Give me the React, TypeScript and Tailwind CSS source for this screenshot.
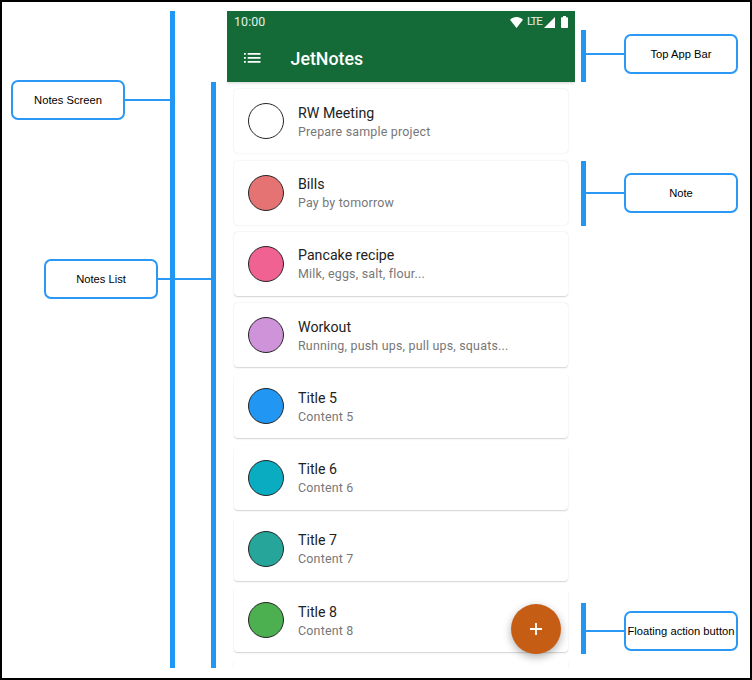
import React from "react";

type NoteItem = { title: string; content: string; color: string; shadow: string };

const soft = "shadow-[0_0_1.5px_rgba(0,0,0,0.17)]";
const medium = "shadow-[0_0.5px_1.5px_rgba(0,0,0,0.18)]";
const strong = "shadow-[0_1px_1.5px_rgba(0,0,0,0.18)]";

const notes: NoteItem[] = [
  { title: "RW Meeting", content: "Prepare sample project", color: "bg-white", shadow: soft },
  { title: "Bills", content: "Pay by tomorrow", color: "bg-[#e57373]", shadow: soft },
  { title: "Pancake recipe", content: "Milk, eggs, salt, flour...", color: "bg-[#f06292]", shadow: medium },
  { title: "Workout", content: "Running, push ups, pull ups, squats...", color: "bg-[#ce93d8]", shadow: medium },
  { title: "Title 5", content: "Content 5", color: "bg-[#2196f3]", shadow: strong },
  { title: "Title 6", content: "Content 6", color: "bg-[#0aacc1]", shadow: strong },
  { title: "Title 7", content: "Content 7", color: "bg-[#26a69a]", shadow: strong },
  { title: "Title 8", content: "Content 8", color: "bg-[#4caf50]", shadow: strong },
];

function Label({ children }: { children: React.ReactNode }) {
  return (
    <div className="flex h-[40px] w-[114px] shrink-0 items-center justify-center whitespace-nowrap rounded-[7px] border-2 border-[#2b98f5] bg-white font-['Liberation_Sans',Arial,sans-serif] text-[11.2px] text-black">
      {children}
    </div>
  );
}

function Connector() {
  return <div className="h-[2px] flex-1 bg-[#2b98f5]" />;
}

function Callout({ label, height, labelShift }: { label: string; height: string; labelShift: string }) {
  return (
    <div className={`flex ${height}`}>
      <div className="h-full w-[5px] bg-[#2196f3]" />
      <div className={`flex h-[40px] flex-1 items-center ${labelShift}`}>
        <Connector />
        <Label>{label}</Label>
      </div>
    </div>
  );
}

function StatusBar() {
  return (
    <div className="flex h-[22px] items-center justify-between pl-[7px] pr-[7px] text-[12.4px] text-white/90">
      <span className="tracking-[0.1px]">10:00</span>
      <div className="flex items-center">
        <svg width="13" height="11" viewBox="0 0 13 11" fill="#fff">
          <path d="M0 2.7C3.7-.8 9.3-.8 13 2.7L6.5 11z" />
        </svg>
        <span className="ml-[4px] w-[15px] text-[11.5px] tracking-[-1.1px]">LTE</span>
        <svg className="ml-[2px]" width="11" height="11" viewBox="0 0 11 11" fill="#fff">
          <path d="M11 0v11H0z" />
        </svg>
        <svg className="ml-[6px]" width="7" height="12" viewBox="0 0 7 12" fill="#fff">
          <path d="M2 0h3v1.2h1.2q.8 0 .8.8v9.2q0 .8-.8.8H.8q-.8 0-.8-.8V2q0-.8.8-.8H2z" />
        </svg>
      </div>
    </div>
  );
}

function NoteCard({ note }: { note: NoteItem }) {
  return (
    <div className={`flex h-[64px] shrink-0 items-center rounded-[4px] bg-white pl-[14px] ${note.shadow}`}>
      <div className={`size-[36px] shrink-0 rounded-full border border-[#252525] ${note.color}`} />
      <div className="ml-[14px] flex flex-col pt-[2px]">
        <div className="text-[14.2px] leading-[18px] tracking-[0.01px] text-[#222]">{note.title}</div>
        <div className="text-[12.45px] leading-[19px] tracking-[0.2px] text-[#777]">{note.content}</div>
      </div>
    </div>
  );
}

function Phone() {
  return (
    <div className="relative flex h-[657px] w-[348px] flex-col overflow-hidden bg-white font-[Roboto,sans-serif]">
      <header className="z-10 h-[71px] shrink-0 bg-[#146b37] shadow-[0_1px_3px_rgba(0,0,0,0.18)]">
        <StatusBar />
        <div className="flex h-[50px] items-center pl-[16.5px] text-white">
          <svg className="-mt-px" width="17" height="10" viewBox="0 0 17 10" fill="currentColor">
            <path d="M0 0h1.8v1.8H0zM0 4h1.8v1.8H0zM0 8h1.8v1.8H0zM3.7 0H16.5v1.8H3.7zM3.7 4H16.5v1.8H3.7zM3.7 8H16.5v1.8H3.7z" />
          </svg>
          <h1 className="ml-[30px] pt-[2px] text-[17.8px] font-medium">JetNotes</h1>
        </div>
      </header>
      <main className="flex flex-col gap-[7.25px] px-[7px] pt-[7.25px]">
        {notes.map((note) => (
          <NoteCard key={note.title} note={note} />
        ))}
        <div className="h-[64px] shrink-0 rounded-[4px] bg-white shadow-[0_1px_1.5px_rgba(0,0,0,0.18)]" />
      </main>
      <button
        aria-label="Add note"
        className="absolute bottom-[14px] right-[14px] flex size-[50px] items-center justify-center rounded-full bg-[#c65d15] shadow-[0_3px_8px_rgba(0,0,0,0.32)]"
      >
        <svg width="12" height="12" viewBox="0 0 12 12" stroke="#fff" strokeWidth="1.8">
          <path d="M6 0v12M0 6h12" />
        </svg>
      </button>
    </div>
  );
}

export default function App() {
  return (
    <div className="flex h-[680px] w-[752px] overflow-hidden border-2 border-black bg-white pt-[9px]">
      <div className="flex w-[168px] flex-col">
        <div className="mt-[69px] flex items-center pl-[9px]">
          <Label>Notes Screen</Label>
          <Connector />
        </div>
        <div className="mt-[139px] flex items-center pl-[42px]">
          <Label>Notes List</Label>
          <Connector />
        </div>
      </div>
      <div className="h-[657px] w-[5px] bg-[#2196f3]" />
      <div className="flex w-[36px] flex-col pt-[267px]">
        <div className="h-[2px] bg-[#2b98f5]" />
      </div>
      <div className="mt-[71px] h-[586px] w-[5px] bg-[#2196f3]" />
      <div className="ml-[11px]">
        <Phone />
      </div>
      <div className="ml-[6px] flex w-[157px] flex-col pt-[19px]">
        <Callout label="Top App Bar" height="h-[52px]" labelShift="mt-[4px]" />
        <div className="mt-[79px]">
          <Callout label="Note" height="h-[65px]" labelShift="mt-[12px]" />
        </div>
        <div className="mt-[377px]">
          <Callout label="Floating action button" height="h-[51px]" labelShift="mt-[8px]" />
        </div>
      </div>
    </div>
  );
}
